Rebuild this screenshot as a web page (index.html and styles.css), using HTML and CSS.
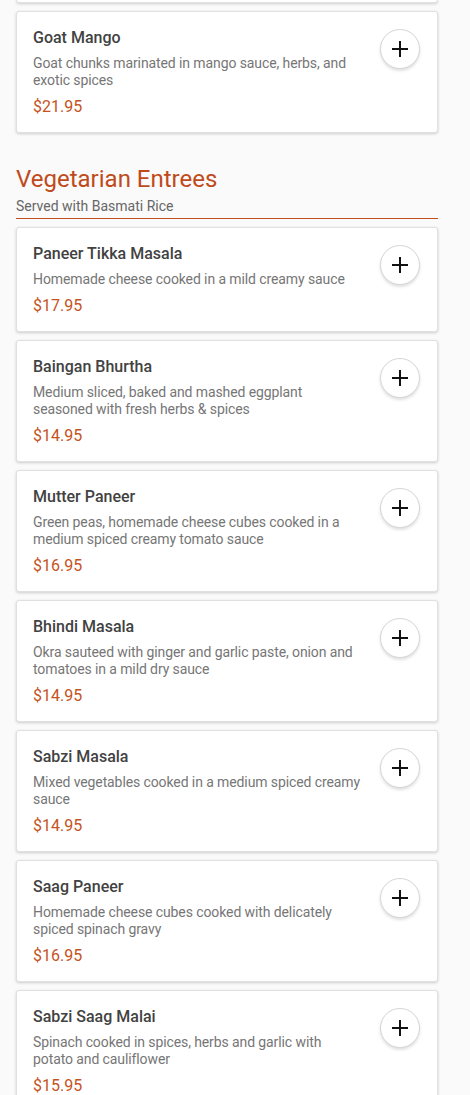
FILE: index.html
```html
<!DOCTYPE html>
<html lang="en">

<head>
    <meta charset="UTF-8">
    <meta name="viewport" content="width=device-width, initial-scale=1.0">
    <title>Menu</title>
    <link rel="stylesheet" href="styles.css">
</head>

<body>
    <div class="menu">
        <div class="section">
            <!-- page is scrolled: only the bottom edge of the previous card shows -->
            <div class="item-card card-peek"></div>
            <div class="item-card">
                <div class="item-info">
                    <h3 class="item-name">Goat Mango</h3>
                    <p class="item-desc">Goat chunks marinated in mango sauce, herbs, and exotic spices</p>
                    <p class="item-price">$21.95</p>
                </div>
                <button class="add-btn" aria-label="Add">
                    <svg width="18" height="18" viewBox="0 0 18 18"><path d="M9 1v16M1 9h16" stroke="#111" stroke-width="2" fill="none"/></svg>
                </button>
            </div>
        </div>

        <div class="section">
            <div class="section-header">
                <h2 class="section-title">Vegetarian Entrees</h2>
                <p class="section-note">Served with Basmati Rice</p>
            </div>

            <div class="item-card">
                <div class="item-info">
                    <h3 class="item-name">Paneer Tikka Masala</h3>
                    <p class="item-desc">Homemade cheese cooked in a mild creamy sauce</p>
                    <p class="item-price">$17.95</p>
                </div>
                <button class="add-btn" aria-label="Add">
                    <svg width="18" height="18" viewBox="0 0 18 18"><path d="M9 1v16M1 9h16" stroke="#111" stroke-width="2" fill="none"/></svg>
                </button>
            </div>
            <div class="item-card">
                <div class="item-info">
                    <h3 class="item-name">Baingan Bhurtha</h3>
                    <p class="item-desc">Medium sliced, baked and mashed eggplant seasoned with fresh herbs &amp; spices</p>
                    <p class="item-price">$14.95</p>
                </div>
                <button class="add-btn" aria-label="Add">
                    <svg width="18" height="18" viewBox="0 0 18 18"><path d="M9 1v16M1 9h16" stroke="#111" stroke-width="2" fill="none"/></svg>
                </button>
            </div>
            <div class="item-card">
                <div class="item-info">
                    <h3 class="item-name">Mutter Paneer</h3>
                    <p class="item-desc">Green peas, homemade cheese cubes cooked in a medium spiced creamy tomato sauce</p>
                    <p class="item-price">$16.95</p>
                </div>
                <button class="add-btn" aria-label="Add">
                    <svg width="18" height="18" viewBox="0 0 18 18"><path d="M9 1v16M1 9h16" stroke="#111" stroke-width="2" fill="none"/></svg>
                </button>
            </div>
            <div class="item-card">
                <div class="item-info">
                    <h3 class="item-name">Bhindi Masala</h3>
                    <p class="item-desc">Okra sauteed with ginger and garlic paste, onion and tomatoes in a mild dry sauce</p>
                    <p class="item-price">$14.95</p>
                </div>
                <button class="add-btn" aria-label="Add">
                    <svg width="18" height="18" viewBox="0 0 18 18"><path d="M9 1v16M1 9h16" stroke="#111" stroke-width="2" fill="none"/></svg>
                </button>
            </div>
            <div class="item-card">
                <div class="item-info">
                    <h3 class="item-name">Sabzi Masala</h3>
                    <p class="item-desc">Mixed vegetables cooked in a medium spiced creamy sauce</p>
                    <p class="item-price">$14.95</p>
                </div>
                <button class="add-btn" aria-label="Add">
                    <svg width="18" height="18" viewBox="0 0 18 18"><path d="M9 1v16M1 9h16" stroke="#111" stroke-width="2" fill="none"/></svg>
                </button>
            </div>
            <div class="item-card">
                <div class="item-info">
                    <h3 class="item-name">Saag Paneer</h3>
                    <p class="item-desc">Homemade cheese cubes cooked with delicately spiced spinach gravy</p>
                    <p class="item-price">$16.95</p>
                </div>
                <button class="add-btn" aria-label="Add">
                    <svg width="18" height="18" viewBox="0 0 18 18"><path d="M9 1v16M1 9h16" stroke="#111" stroke-width="2" fill="none"/></svg>
                </button>
            </div>
            <div class="item-card">
                <div class="item-info">
                    <h3 class="item-name">Sabzi Saag Malai</h3>
                    <p class="item-desc">Spinach cooked in spices, herbs and garlic with potato and cauliflower</p>
                    <p class="item-price">$15.95</p>
                </div>
                <button class="add-btn" aria-label="Add">
                    <svg width="18" height="18" viewBox="0 0 18 18"><path d="M9 1v16M1 9h16" stroke="#111" stroke-width="2" fill="none"/></svg>
                </button>
            </div>
        </div>
    </div>
</body>

</html>
```

FILE: styles.css
```css
body {
    margin: 0;
    font-family: Roboto, "Liberation Sans", Arial, sans-serif;
    background-color: #fafafa;
    overflow: hidden;
}

.menu {
    padding: 0 32px 0 16px;
}

.section {
    margin-bottom: 32px;
}

.section-header {
    border-bottom: 1px solid #c0501e;
    padding-bottom: 3px;
    margin-bottom: 8px;
}

.section-title {
    margin: 0;
    font-size: 24px;
    font-weight: 400;
    line-height: 28px;
    color: #bf4a1b;
}

.section-note {
    margin: 5px 0 0;
    font-size: 14px;
    line-height: 17px;
    color: #666;
}

.item-card {
    display: flex;
    align-items: flex-start;
    background-color: #fff;
    border: 1px solid #e0e0e0;
    border-radius: 3px;
    box-shadow: 0 1px 3px rgba(0, 0, 0, 0.18);
    padding: 16px 16px 15px;
    margin-bottom: 8px;
}

.card-peek {
    height: 2px;
    padding: 0;
    border-top: 0;
    border-radius: 0 0 3px 3px;
}

.item-info {
    flex: 1;
    min-width: 0;
}

.item-name {
    margin: 0;
    font-size: 16px;
    font-weight: 500;
    line-height: 20px;
    color: #424242;
}

.item-desc {
    margin: 7px 0 0;
    font-size: 14px;
    line-height: 17px;
    letter-spacing: -0.1px;
    color: #767676;
}

.item-price {
    margin: 8px 0 0;
    font-size: 16px;
    line-height: 20px;
    color: #c4531e;
}

.add-btn {
    flex: none;
    width: 40px;
    height: 40px;
    margin: 1px 1px 0 18px;
    border: 1px solid #d6d6d6;
    border-radius: 50%;
    background-color: #fff;
    box-shadow: 0 2px 3px rgba(0, 0, 0, 0.12);
    display: flex;
    align-items: center;
    justify-content: center;
    padding: 0;
    cursor: pointer;
}
```
